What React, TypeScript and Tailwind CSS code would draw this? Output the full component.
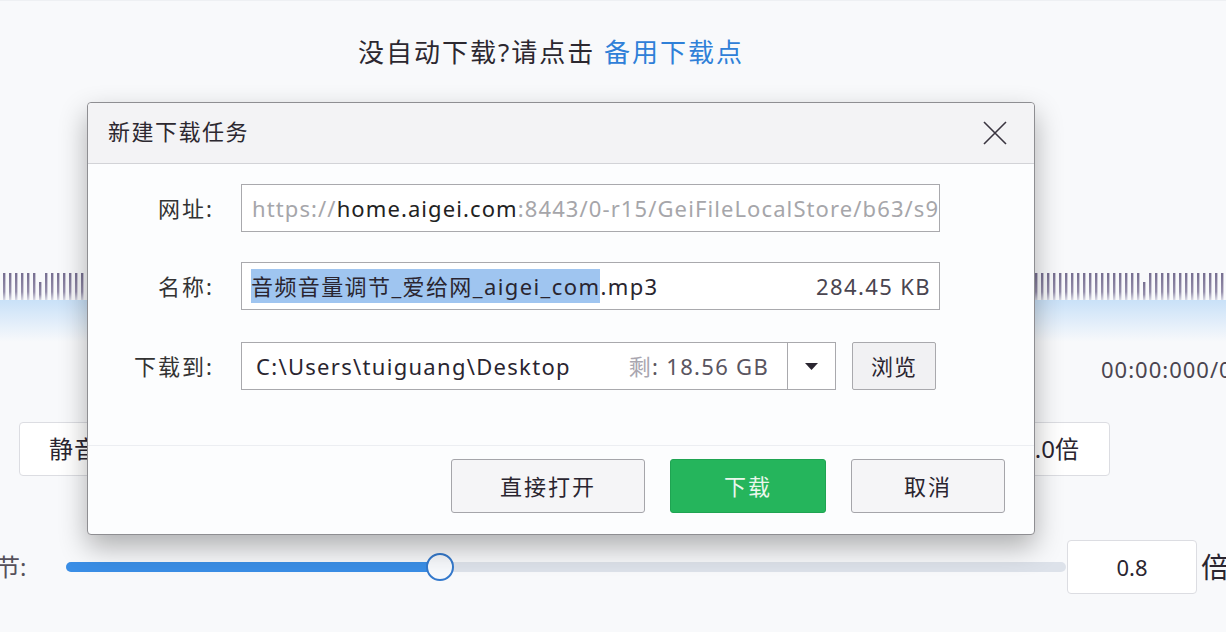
import React from "react"

const font = { fontFamily: '"Noto Sans", "Noto Sans CJK SC", sans-serif' }

function Waveform() {
   const ticks = Array.from({ length: 205 }, (_, i) => i)
   return (
      <svg width="1226" height="28" className="block">
         <defs>
            <linearGradient id="tick" x1="0" y1="0" x2="0" y2="1">
               <stop offset="0" stopColor="#766e90" />
               <stop offset="0.7" stopColor="#958eab" />
               <stop offset="1" stopColor="#d9dbe6" />
            </linearGradient>
         </defs>
         {ticks.map((i) => (
            <rect key={i} x={3 + i * 6} y={i % 23 === 6 ? 10 : 1} width="2.4" height={i % 23 === 6 ? 18 : 27} fill="url(#tick)" />
         ))}
      </svg>
   )
}

function Field({ label, children, h = "h-[48px]", mt = "" }: { label: string; children: React.ReactNode; h?: string; mt?: string }) {
   return (
      <div className={`flex items-center ${mt}`}>
         <div className="w-[126px] text-right text-[22px] tracking-[2px] text-[#333]">{label}</div>
         <div className={`ml-[27px] ${h} flex`}>{children}</div>
      </div>
   )
}

function Dialog() {
   return (
      <div className="absolute left-[87px] top-[101px] w-[948px] h-[433px] flex flex-col bg-[#fcfdfe] border border-[#8e8e92] rounded-[4px] shadow-[0_12px_28px_rgba(0,0,0,0.3)]">
         <div className="h-[61px] shrink-0 flex items-center justify-between bg-[#f3f3f5] border-b border-[#d2d3d7] rounded-t-[4px]">
            <span className="pl-[20px] text-[22px] tracking-[1.5px] text-[#2c2830] -mt-[4px]">新建下载任务</span>
            <svg width="24" height="24" viewBox="0 0 24 24" className="mr-[27px]">
               <path d="M1 1 L23 23 M23 1 L1 23" stroke="#3a3540" strokeWidth="1.6" />
            </svg>
         </div>
         <div className="pt-[20px]">
            <Field label="网址:" h="h-[48px]">
               <div className="w-[699px] h-full flex items-center border border-[#a9a9ad] bg-white overflow-hidden whitespace-nowrap pl-[10px] text-[22px] tracking-[1.1px] text-[#a6a6aa]">
                  <span>https://</span>
                  <span className="text-[#222]">home.aigei.com</span>
                  <span>:8443/0-r15/GeiFileLocalStore/b63/s9f</span>
               </div>
            </Field>
            <Field label="名称:" mt="mt-[30px]">
               <div className="w-[699px] h-full flex items-center justify-between border border-[#a9a9ad] bg-white whitespace-nowrap pl-[9px] pr-[8px] text-[22px] tracking-[1.4px] text-[#2a2530]">
                  <span>
                     <span className="bg-[#9fc5f0] py-[2px]">音频音量调节_爱给网_aigei_com</span>
                     <span>.mp3</span>
                  </span>
                  <span className="text-[#4a4550] tracking-[1.4px]">284.45 KB</span>
               </div>
            </Field>
            <Field label="下载到:" mt="mt-[32px]">
               <div className="w-[595px] h-full flex items-center border border-[#a9a9ad] bg-white whitespace-nowrap text-[22px] tracking-[1.3px] text-[#2a2530]">
                  <span className="pl-[14px] flex-1">C:\Users\tuiguang\Desktop</span>
                  <span className="text-[#5a5560] pr-[18px]">
                     <span className="text-[#a9a6b0]">剩</span>: 18.56 GB
                  </span>
                  <div className="w-[48px] h-full border-l border-[#a9a9ad] flex items-center justify-center">
                     <svg width="13" height="7" viewBox="0 0 13 7">
                        <path d="M0 0 H13 L6.5 7 Z" fill="#2a2530" />
                     </svg>
                  </div>
               </div>
               <button className="ml-[16px] w-[84px] h-full flex items-center justify-center border border-[#a9a9ad] rounded-[2px] bg-[#f1f1f3] text-[22px] tracking-[1px] text-[#2a2530]">
                  浏览
               </button>
            </Field>
         </div>
         <div className="mt-[55px] border-t border-[#eceef2] flex justify-end gap-[25px] pt-[13px] pr-[29px] text-[22px] tracking-[2px]">
            <button className="w-[194px] h-[54px] border border-[#a5a5aa] rounded-[3px] bg-[#f5f5f7] text-[#2a2530]">直接打开</button>
            <button className="w-[156px] h-[54px] rounded-[3px] bg-[#25b55c] border border-[#1fa452] text-[#eaf7ec]">下载</button>
            <button className="w-[154px] h-[54px] border border-[#a5a5aa] rounded-[3px] bg-[#f5f5f7] text-[#2a2530]">取消</button>
         </div>
      </div>
   )
}

export default function App() {
   return (
      <div style={font} className="relative w-[1226px] h-[632px] overflow-hidden bg-[#f8f9fb] border-t border-[#eef0f3]">
         <div className="pt-[33px] pl-[358px] h-[70px] text-[26px] leading-[36px] tracking-[2px] text-[#2c2830] whitespace-nowrap">
            没自动下载?请点击 <span className="text-[#2f80d8]">备用下载点</span>
         </div>
         <div className="mt-[201px]">
            <Waveform />
         </div>
         <div className="h-[42px] bg-gradient-to-b from-[#c9e1f8] to-[#f8f9fb]" />
         <div className="mt-[12px] pl-[1101px] h-[30px] text-[22px] leading-[30px] tracking-[1px] text-[#4a4550] whitespace-nowrap">00:00:000/00:00:000</div>
         <div className="mt-[38px] flex h-[54px]">
            <div className="ml-[19px] w-[140px] h-full flex items-center pl-[29px] border border-[#dcdde2] rounded-[4px] bg-white text-[24px] tracking-[1px] text-[#2a2530]">
               静音
            </div>
            <div className="ml-auto mr-[116px] w-[120px] h-full flex items-center justify-end pr-[30px] border border-[#dcdde2] rounded-[4px] bg-white text-[24px] text-[#2a2530]">
               1.0倍
            </div>
         </div>
         <div className="mt-[64px] flex items-center h-[54px] whitespace-nowrap">
            <span className="ml-[-4px] w-[70px] shrink-0 text-[24px] text-[#55505a]">节:</span>
            <div className="relative w-[1000px] shrink-0 h-[10px] rounded-full bg-[#dde2ea]">
               <div className="h-full w-[374px] rounded-full bg-[#3a8ee6]" />
               <div className="absolute left-[360px] top-[-9px] w-[28px] h-[28px] rounded-full bg-[#f7f9fc] border-2 border-[#3479cc]" />
            </div>
            <div className="ml-[1px] w-[130px] shrink-0 h-[54px] flex items-center justify-center border border-[#dcdde2] rounded-[4px] bg-white text-[22px] text-[#2a2530]">
               0.8
            </div>
            <span className="ml-[4px] text-[28px] text-[#2a2530]">倍</span>
         </div>
         <Dialog />
      </div>
   )
}
